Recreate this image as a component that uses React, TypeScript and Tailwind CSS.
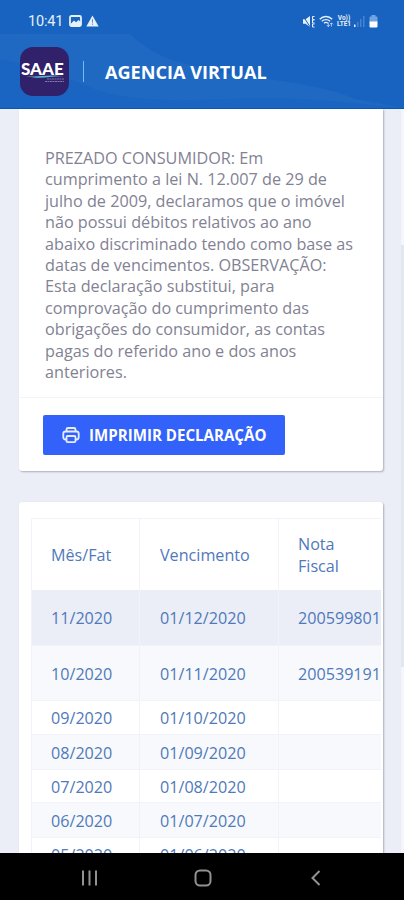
interface Bill {
  month: string
  due: string
  invoice?: string
  height: string
  background: string
}

const bills: Bill[] = [
  { month: '11/2020', due: '01/12/2020', invoice: '200599801', height: 'h-14', background: 'bg-[#ebeef7]' },
  { month: '10/2020', due: '01/11/2020', invoice: '200539191', height: 'h-[55px]', background: 'bg-[#f7f9fc]' },
  { month: '09/2020', due: '01/10/2020', height: 'h-[34px]', background: 'bg-white' },
  { month: '08/2020', due: '01/09/2020', height: 'h-[35px]', background: 'bg-[#f7f9fc]' },
  { month: '07/2020', due: '01/08/2020', height: 'h-[33px]', background: 'bg-white' },
  { month: '06/2020', due: '01/07/2020', height: 'h-[35px]', background: 'bg-[#f7f9fc]' },
  { month: '05/2020', due: '01/06/2020', height: 'h-[34px]', background: 'bg-white' },
]

const notice = [
  'PREZADO CONSUMIDOR: Em',
  'cumprimento a lei N. 12.007 de 29 de',
  'julho de 2009, declaramos que o imóvel',
  'não possui débitos relativos ao ano',
  'abaixo discriminado tendo como base as',
  'datas de vencimentos. OBSERVAÇÃO:',
  'Esta declaração substitui, para',
  'comprovação do cumprimento das',
  'obrigações do consumidor, as contas',
  'pagas do referido ano e dos anos',
  'anteriores.',
]

function StatusBar() {
  return (
    <div className="flex h-[42px] items-center justify-between pl-7 pr-[26px] text-[#e6effa]">
      <div className="flex items-center gap-[6px]">
        <span className="w-[35px] whitespace-nowrap pt-0.5 font-[Roboto] text-[14.5px] leading-none tracking-[-0.2px]">10:41</span>
        <svg width="13" height="12" viewBox="0 0 13 12">
          <rect x="1" y="1" width="11" height="10" rx="1.5" fill="none" stroke="currentColor" strokeWidth="1.8" />
          <path d="M2 8.5 5 5.5l2 1.7L9.5 5 12 7v4H2z" fill="currentColor" />
        </svg>
        <svg width="13" height="12" viewBox="0 0 13 12" className="-ml-0.5">
          <path d="M6.5.5 12.7 11.5H.3z" fill="currentColor" />
          <path d="M6.5 4.2v3.5M6.5 8.6v1.2" stroke="#5b8fce" strokeWidth="1" />
        </svg>
      </div>
      <div className="flex items-center">
        <svg width="14" height="13" viewBox="0 0 14 13">
          <path d="M1 4.2h2.5L8 1v11L3.5 8.8H1z" fill="currentColor" />
          <path d="m1 .8 7 11" stroke="#1763bd" strokeWidth="1" />
          <path d="M12.5 1.5h-2v3h2M12.5 5h-2v3h2M12.5 9h-2v3h2" stroke="currentColor" fill="none" strokeWidth="1" />
        </svg>
        <svg width="15" height="13" viewBox="0 0 15 13" className="ml-[3px]">
          <path d="M.7 4.2c3.5-3.7 9-3.7 12.5 0M2.8 6.3c2.4-2.2 6-2.2 8.3 0M5 8.2c1.2-1 2.7-1 4 0" fill="none" stroke="currentColor" strokeWidth="1.4" />
          <path d="M9.3 7.5v4M7.8 10l1.5 1.7 1.4-1.7M12.4 11.5V8M11 9.3l1.4-1.5 1.5 1.5" fill="none" stroke="currentColor" strokeWidth=".7" />
        </svg>
        <div className="ml-0.5 flex w-4 flex-col items-center font-[Roboto] text-[6.5px] font-bold leading-[6.5px]">
          <span>Vo))</span>
          <span className="whitespace-nowrap">LTE1</span>
        </div>
        <svg width="12" height="13" viewBox="0 0 12 13" className="ml-[1px]">
          <path d="M1 9.5h1.5V12H1z" fill="currentColor" />
          <path d="M4 7h1.5v5H4zM7 4h1.5v8H7zM10 1h1.5v11H10z" fill="#4583d2" />
        </svg>
        <svg width="9" height="13" viewBox="0 0 9 13" className="ml-[4px]">
          <path d="M2.5 0h4v1.5h1A1 1 0 0 1 8.5 2.5V7h-8V2.5a1 1 0 0 1 1-1h1z" fill="#70a3df" />
          <path d="M.5 6.5h8V11.5a1 1 0 0 1-1 1h-6a1 1 0 0 1-1-1z" fill="#fff" />
        </svg>
      </div>
    </div>
  )
}

function Header() {
  return (
    <header className="relative h-[109px] shrink-0 border-b border-[#0c56b0] bg-[#1763bf]">
      <svg className="absolute inset-0" width="404" height="108" viewBox="0 0 404 108">
        <path d="M0 34H130C153 56 176 62 210 70S320 82 355 99L404 108H0z" fill="#1f69c2" />
        <path d="M0 60C45 64 75 83 100 91S165 102 225 99S320 99 404 108H0z" fill="#1965c1" />
      </svg>
      <div className="relative">
        <StatusBar />
        <div className="flex items-center pl-[20px] pt-[5px]">
          <div className="relative h-[49px] w-[49px] rounded-[13px] bg-[#30216a] pl-px pt-[13px]">
            <span className="block whitespace-nowrap font-[Lato] text-[17px] font-black leading-[18px] text-white">SAAE</span>
            <svg className="absolute left-0 top-[26px]" width="49" height="12" viewBox="0 0 49 12">
              <path d="M4 2.5c15 3 22-2 40 1-15-1-22 4-40-1z" fill="#5eb8d4" />
              <path d="M27 6h17M25 8.5h19" stroke="#a39abf" strokeWidth=".7" strokeDasharray="2 .5" />
            </svg>
          </div>
          <div className="ml-[14px] h-[21px] w-px bg-[#72bdf0]" />
          <h1 className="ml-[21px] whitespace-nowrap text-[18.1px] font-bold leading-6 text-white">AGENCIA VIRTUAL</h1>
        </div>
      </div>
    </header>
  )
}

function PrinterIcon() {
  return (
    <svg width="18" height="18" viewBox="0 0 18 18" fill="none" stroke="#e6edff" strokeWidth="1.8" strokeLinejoin="round">
      <path d="M4.5 5V3.5A1.5 1.5 0 0 1 6 2h6a1.5 1.5 0 0 1 1.5 1.5V5" />
      <path d="M4.5 13.500h-1A2.200 2.200 0 0 1 1.300 11.300V7.700A2.200 2.200 0 0 1 3.500 5.500h11a2.200 2.200 0 0 1 2.200 2.200v3.600a2.200 2.200 0 0 1-2.200 2.200h-1" />
      <rect x="4.5" y="10" width="9" height="6.2" rx="1.2" />
    </svg>
  )
}

function NoticeCard() {
  return (
    <section className="h-[362px] shrink-0 rounded-b-[3px] bg-white shadow-[1px_1px_2px_#a9afb9]">
      <div className="h-[289px] border-b border-[#f3f4f7] pl-[26px] pt-[39px]">
        <p className="text-[16.2px] leading-[21.4px] text-[#828293]">
          {notice.map(line => (
            <span key={line} className="block whitespace-nowrap">{line}</span>
          ))}
        </p>
      </div>
      <div className="pl-6 pt-[17px]">
        <button className="flex h-10 w-[242px] items-center rounded-[2px] bg-[#3262fa] pl-[19px] text-white">
          <PrinterIcon />
          <span className="ml-[9px] whitespace-nowrap text-[15.1px] font-bold">IMPRIMIR DECLARAÇÃO</span>
        </button>
      </div>
    </section>
  )
}

function BillsTable() {
  return (
    <section className="mt-[31px] h-[360px] shrink-0 rounded-t-[3px] bg-white pl-3 pr-0.5 pt-4 shadow-[1px_1px_2px_#a9afb9]">
      <table className="w-full table-fixed border-separate border-spacing-0 border-l border-t border-[#f1f3f8] text-left text-[16.15px] leading-[21.4px] text-[#5079ba]">
        <colgroup>
          <col className="w-[108px]" />
          <col className="w-[139px]" />
          <col />
        </colgroup>
        <thead>
          <tr className="h-[71px]">
            <th className="border-r border-[#f1f3f8] p-0 pl-[19px] pt-0.5 font-normal">Mês/Fat</th>
            <th className="border-r border-[#f1f3f8] p-0 pl-5 pt-0.5 font-normal">Vencimento</th>
            <th className="p-0 pl-[19px] pt-0.5 font-normal">Nota<br />Fiscal</th>
          </tr>
        </thead>
        <tbody>
          {bills.map(bill => (
            <tr key={bill.month} className={`${bill.height} ${bill.background}`}>
              <td className="border-b border-r border-[#f1f3f8] p-0 pl-[19px] pt-[3px]">{bill.month}</td>
              <td className="border-b border-r border-[#f1f3f8] p-0 pl-5 pt-[3px]">{bill.due}</td>
              <td className="border-b border-[#f1f3f8] p-0 pl-[19px] pt-[3px]">{bill.invoice}</td>
            </tr>
          ))}
        </tbody>
      </table>
    </section>
  )
}

function NavigationBar() {
  return (
    <nav className="h-[47px] shrink-0 bg-black">
      <svg width="404" height="47" viewBox="0 0 404 47" fill="none" stroke="#929292" strokeWidth="2">
        <path d="M83 17.5v15M89.5 17.5v15M96 17.5v15" />
        <rect x="195.5" y="17.5" width="15" height="15" rx="4.5" />
        <path d="m319.5 18-7 7 7 7" />
      </svg>
    </nav>
  )
}

export default function App() {
  return (
    <div className="flex h-[900px] w-[404px] flex-col overflow-hidden bg-[#ebeef7] font-['Open_Sans',sans-serif]">
      <Header />
      <main className="flex h-[744px] shrink-0 overflow-hidden">
        <div className="ml-[19px] flex w-[364px] flex-col">
          <NoticeCard />
          <BillsTable />
        </div>
        <div className="ml-auto w-[3px] bg-[#f4f6fb] pt-[136px]">
          <div className="h-[422px] bg-[#e3e7f1]" />
        </div>
      </main>
      <NavigationBar />
    </div>
  )
}
